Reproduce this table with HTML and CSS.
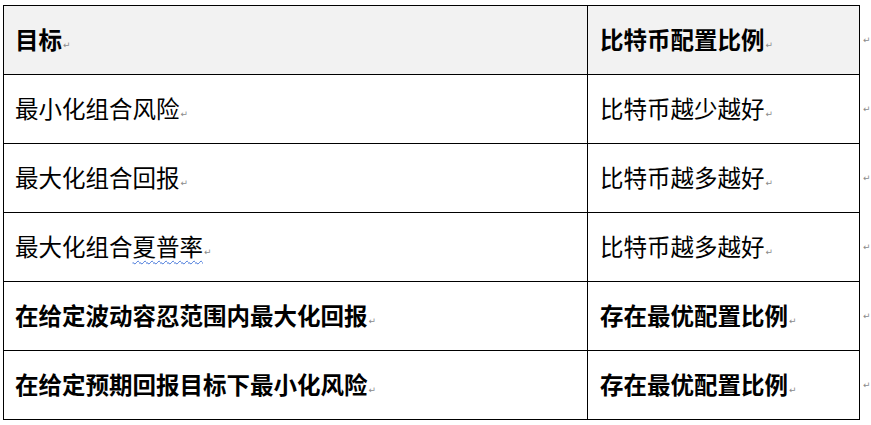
FILE: index.html
```html
<!DOCTYPE html>
<html lang="zh-CN">
<head>
<meta charset="utf-8">
<link rel="stylesheet" href="styles.css">
</head>
<body>
<table class="grid">
  <colgroup>
    <col class="col1">
    <col class="col2">
    <col class="col3">
  </colgroup>
  <tr class="head">
    <td class="c1 b">目标<span class="pm">↵</span></td>
    <td class="c2 b">比特币配置比例<span class="pm">↵</span></td>
    <td class="row-end"><span class="pm">↵</span></td>
  </tr>
  <tr>
    <td class="c1">最小化组合风险<span class="pm">↵</span></td>
    <td class="c2">比特币越少越好<span class="pm">↵</span></td>
    <td class="row-end"><span class="pm">↵</span></td>
  </tr>
  <tr>
    <td class="c1">最大化组合回报<span class="pm">↵</span></td>
    <td class="c2">比特币越多越好<span class="pm">↵</span></td>
    <td class="row-end"><span class="pm">↵</span></td>
  </tr>
  <tr>
    <td class="c1">最大化组合<span class="spell">夏普率</span><span class="pm">↵</span></td>
    <td class="c2">比特币越多越好<span class="pm">↵</span></td>
    <td class="row-end"><span class="pm">↵</span></td>
  </tr>
  <tr>
    <td class="c1 b">在给定波动容忍范围内最大化回报<span class="pm">↵</span></td>
    <td class="c2 b">存在最优配置比例<span class="pm">↵</span></td>
    <td class="row-end"><span class="pm">↵</span></td>
  </tr>
  <tr>
    <td class="c1 b">在给定预期回报目标下最小化风险<span class="pm">↵</span></td>
    <td class="c2 b">存在最优配置比例<span class="pm">↵</span></td>
    <td class="row-end"><span class="pm">↵</span></td>
  </tr>
</table>
</body>
</html>
```

FILE: styles.css
```css
html, body {
  margin: 0;
  padding: 0;
  background: #ffffff;
}
body {
  padding: 5px 0 0 3px;
  font-family: "Noto Sans CJK SC", "Noto Sans", sans-serif;
  color: #000;
}
.grid {
  border-collapse: collapse;
  table-layout: fixed;
  width: 867px;
}
.col1 { width: 584px; }
.col2 { width: 272px; }
.col3 { width: 11px; }
.grid td {
  border: 1px solid #000;
  height: 68px;
  padding: 0;
  font-size: 23.5px;
  line-height: 1;
  vertical-align: middle;
  white-space: nowrap;
}
.grid td.c1 {
  padding-left: 11px;
}
.grid td.c2 {
  padding-left: 12px;
}
.grid td.row-end {
  border: none;
  padding-left: 3px;
}
.head td.c1, .head td.c2 {
  background: #f2f2f2;
}
.b {
  font-weight: 700;
}
.pm {
  font-family: "DejaVu Sans", sans-serif;
  font-size: 9px;
  font-weight: 400;
  color: #8a8a8a;
  margin-left: 1px;
  vertical-align: 1px;
}
.row-end .pm {
  margin-left: 0;
  vertical-align: 6px;
}
.spell {
  text-decoration: underline wavy #3f72d8;
  text-decoration-thickness: 1px;
  text-underline-offset: 4px;
}
```
